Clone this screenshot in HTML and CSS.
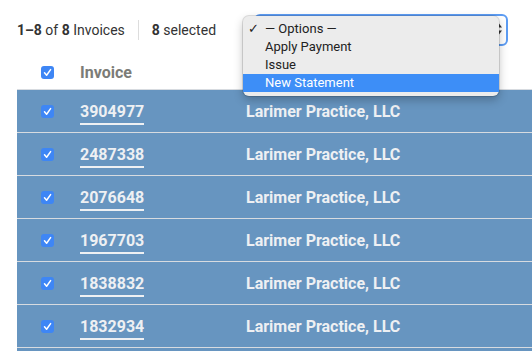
FILE: index.html
```html
<!DOCTYPE html>
<html lang="en">
<head>
    <meta charset="UTF-8">
    <meta name="viewport" content="width=device-width, initial-scale=1.0">
    <title>Invoices</title>
    <link rel="stylesheet" href="styles.css">
</head>
<body>
    <div class="toolbar">
        <span class="count"><b>1–8</b> of <b>8</b> Invoices</span>
        <span class="divider"></span>
        <span class="selected"><b>8</b> selected</span>

        <div class="bulk">
            <span class="arrows">
                <svg width="8" height="14" viewBox="0 0 8 14"><path d="M1 5.5 4 1.5 7 5.5Z M1 8.5 4 12.5 7 8.5Z" fill="#333"/></svg>
            </span>
            <ul class="menu">
                <li><span class="tick">✓</span>— Options —</li>
                <li>Apply Payment</li>
                <li>Issue</li>
                <li class="active">New Statement</li>
            </ul>
        </div>
    </div>

    <div class="table">
        <div class="row head">
            <div class="cell"><span class="check"></span></div>
            <div class="cell">Invoice</div>
            <div class="cell"></div>
        </div>
        <div class="row">
            <div class="cell"><span class="check"></span></div>
            <div class="cell"><a class="num">3904977</a></div>
            <div class="cell">Larimer Practice, LLC</div>
        </div>
        <div class="row">
            <div class="cell"><span class="check"></span></div>
            <div class="cell"><a class="num">2487338</a></div>
            <div class="cell">Larimer Practice, LLC</div>
        </div>
        <div class="row">
            <div class="cell"><span class="check"></span></div>
            <div class="cell"><a class="num">2076648</a></div>
            <div class="cell">Larimer Practice, LLC</div>
        </div>
        <div class="row">
            <div class="cell"><span class="check"></span></div>
            <div class="cell"><a class="num">1967703</a></div>
            <div class="cell">Larimer Practice, LLC</div>
        </div>
        <div class="row">
            <div class="cell"><span class="check"></span></div>
            <div class="cell"><a class="num">1838832</a></div>
            <div class="cell">Larimer Practice, LLC</div>
        </div>
        <div class="row">
            <div class="cell"><span class="check"></span></div>
            <div class="cell"><a class="num">1832934</a></div>
            <div class="cell">Larimer Practice, LLC</div>
        </div>
        <div class="row last"></div>
    </div>
</body>
</html>
```

FILE: styles.css
```css
body {
    margin: 0;
    padding: 0;
    background: #fff;
    font-family: Roboto, "Liberation Sans", Arial, sans-serif;
    color: #333;
    overflow: hidden;
}

.toolbar {
    display: flex;
    align-items: center;
    height: 32px;
    padding: 14px 24px 10px 17px;
    font-size: 14px;
}

.divider {
    width: 1px;
    height: 20px;
    background: #ddd;
    margin: 0 13px;
}

.bulk {
    position: relative;
    margin-left: auto;
    width: 250px;
    height: 28px;
    border: 2px solid #5c9cf3;
    border-radius: 6px;
    background: #fff;
}

.arrows {
    position: absolute;
    right: 3px;
    top: 6px;
}

.menu {
    position: absolute;
    left: -13px;
    top: 0;
    width: 256px;
    margin: 0;
    padding: 4px 0;
    list-style: none;
    background: #ececec;
    border-radius: 6px;
    box-shadow: 0 0 0 1px rgba(0, 0, 0, 0.12), 0 4px 10px rgba(0, 0, 0, 0.25);
    font-size: 13px;
    color: #222;
}

.menu li {
    position: relative;
    height: 18px;
    line-height: 18px;
    padding-left: 22px;
}

.menu .tick {
    position: absolute;
    left: 5px;
}

.menu .active {
    background: #3d8ef7;
    color: #fff;
}

.table {
    margin-left: 17px;
}

.row {
    display: grid;
    grid-template-columns: 63px 166px 1fr;
    align-items: center;
    height: 42px;
    border-top: 1px solid #d7dbe0;
    background: #6795c0;
    color: #eef0f3;
    font-size: 16px;
    font-weight: 700;
}

.row.head {
    height: 33px;
    border-top: 0;
    background: #fff;
    color: #7c7c77;
}

.cell:first-child {
    padding-left: 24px;
    display: flex;
}

.check {
    width: 13px;
    height: 13px;
    border-radius: 3px;
    background: #3e86f5 url("data:image/svg+xml,%3Csvg xmlns='http://www.w3.org/2000/svg' viewBox='0 0 13 13'%3E%3Cpath d='M3.5 6.8 5.6 9.2 9.6 3.6' fill='none' stroke='white' stroke-width='1.5' stroke-linecap='round' stroke-linejoin='round'/%3E%3C/svg%3E") center / 13px 13px no-repeat;
}

.num {
    border-bottom: 2px solid #eef0f3;
    padding-bottom: 2px;
}
```
